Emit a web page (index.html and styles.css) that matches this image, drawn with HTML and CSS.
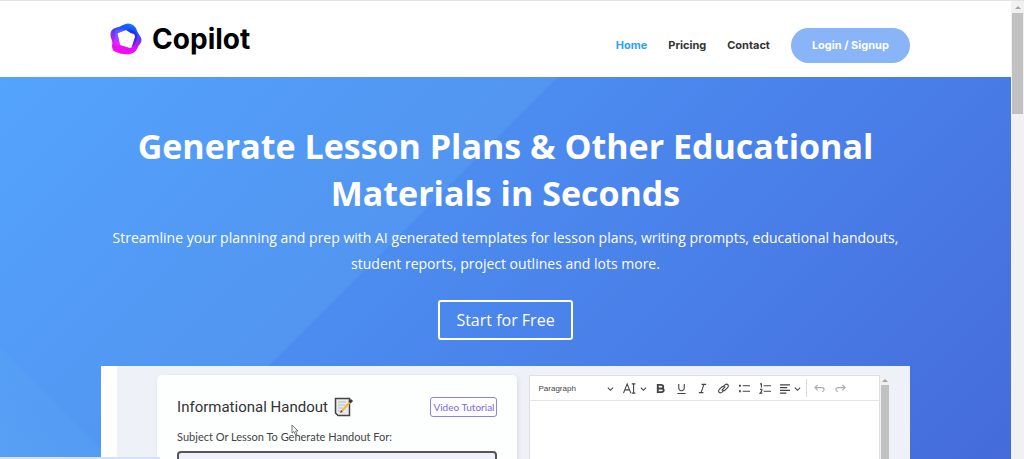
FILE: index.html
```
<!DOCTYPE html>
<html lang="en">
<head>
    <meta charset="UTF-8">
    <meta name="viewport" content="width=device-width, initial-scale=1.0">
    <title>Copilot</title>
    <link rel="stylesheet" href="styles.css">
</head>
<body>
    <div class="page">
        <header class="site-header">
            <div class="container header-inner">
                <a class="logo" href="#">
                    <svg class="logo-mark" viewBox="0 0 32 32" aria-hidden="true">
                        <defs>
                            <linearGradient id="ring" x1="0.3" y1="1" x2="0.6" y2="0">
                                <stop offset="0" stop-color="#ff0af0"/>
                                <stop offset="0.3" stop-color="#e010fa"/>
                                <stop offset="0.6" stop-color="#6a35f5"/>
                                <stop offset="0.85" stop-color="#0b5cff"/>
                                <stop offset="1" stop-color="#1276ff"/>
                            </linearGradient>
                            <linearGradient id="fold" x1="0" y1="0" x2="0.2" y2="1">
                                <stop offset="0" stop-color="#3c7cff"/>
                                <stop offset="1" stop-color="#f02cff"/>
                            </linearGradient>
                        </defs>
                        <path fill="url(#ring)" fill-rule="evenodd" d="M13 2Q18 -1 23 2Q26 4 27 8Q28 10 30 13Q33 17 30 21Q28 23 27 26Q25 30 20 31Q12 32 6 29Q2 28 2 23Q3 19 1 15Q-1 7 5 5Q10 4 13 2ZM16 7L8 10Q7 11 8 13L10 22L20 25Q22 25 22 23L25 14Q25 12 24 11Q20 10 16 7Z"/>
                        <path fill="url(#fold)" opacity="0.7" d="M5 8Q9 5 16 7L8 10Q7 11 8 13L10 22Q4 24 4 18Q5 13 5 8Z"/>
                        <path fill="#2412c8" opacity="0.5" d="M16 7Q24 5 27 12Q27 20 22 24L25 14Q25 12 24 11Q20 10 16 7Z"/>
                    </svg>
                    <span>Copilot</span>
                </a>
                <nav class="main-nav">
                    <a class="active" href="#">Home</a>
                    <a href="#">Pricing</a>
                    <a href="#">Contact</a>
                    <a class="login-btn" href="#">Login / Signup</a>
                </nav>
            </div>
        </header>

        <main class="hero">
            <div class="container">
                <h1>Generate Lesson Plans &amp; Other Educational Materials in Seconds</h1>
                <p>Streamline your planning and prep with AI generated templates for lesson plans, writing prompts, educational handouts, student reports, project outlines and lots more.</p>
                <a class="start-btn" href="#">Start for Free</a>

                <div class="app">
                    <form class="handout">
                        <div class="handout-head">
                            <h2>Informational Handout</h2>
                            <svg class="memo" viewBox="0 0 20 20" aria-hidden="true">
                                <path fill="#e9ebeb" stroke="#444" stroke-width="1.500" d="M1.500 1.500H15.500V18.500H4L1.500 16Z"/>
                                <path stroke="#b7bcbe" d="M4 5H12M4 8H11M4 11H9M4 14H8"/>
                                <path stroke="#f4b63f" stroke-width="2" d="M8 14L16 5"/>
                                <path stroke="#3b3b3b" stroke-width="3" d="M15.500 5.500L18 3"/>
                                <path fill="#555" d="M6 16L7 13L9 15Z"/>
                            </svg>
                            <button type="button" class="video-btn">Video Tutorial</button>
                        </div>
                        <label for="subject">Subject Or Lesson To Generate Handout For:</label>
                        <input type="text" id="subject" value="World War Two">
                        <svg class="cursor" viewBox="0 0 8 12" aria-hidden="true">
                            <path fill="#fff" stroke="#777" d="M1 1V9L3 7.500L4.500 11L6 10.300L4.500 7H7Z"/>
                        </svg>
                    </form>

                    <div class="editor">
                        <div class="editor-main">
                            <div class="toolbar">
                                <button type="button" class="paragraph">Paragraph
                                    <svg class="chevron" viewBox="0 0 8 8"><path d="M1 3L4 6L7 3"/></svg>
                                </button>
                                <button type="button" class="wide" aria-label="Font size">
                                    <svg class="font-icon" viewBox="0 0 14 12"><path d="M1 11L5 1L9 11M2.500 7.500H7.500M10 1H14M12 1V11M10 11H14"/></svg>
                                    <svg class="chevron" viewBox="0 0 8 8"><path d="M1 3L4 6L7 3"/></svg>
                                </button>
                                <button type="button" aria-label="Bold"><svg viewBox="0 0 12 12"><path class="heavy" d="M3 2H6.500Q9 2 9 4T6.500 6H3ZM3 6H7Q9.500 6 9.500 8T7 10H3Z"/></svg></button>
                                <button type="button" aria-label="Underline"><svg viewBox="0 0 12 12"><path d="M3 1V5Q3 8.500 6 8.500T9 5V1M1.500 11.500H10.500"/></svg></button>
                                <button type="button" aria-label="Italic"><svg viewBox="0 0 12 12"><path d="M5 1.500H10M2 10.500H7M7.500 1.500L4.500 10.500"/></svg></button>
                                <button type="button" aria-label="Link"><svg viewBox="0 0 12 12"><path d="M4 8L8 4M5 4.500L7.500 2Q9.500 0.500 11 2Q12 3.500 10.500 5L7.500 8Q6 9 5 8M7 7.500L4.500 10Q2.500 11.500 1 10Q0 8.500 1.500 7L4.500 4Q6 3 7 4"/></svg></button>
                                <button type="button" aria-label="Bulleted list"><svg viewBox="0 0 12 12"><path d="M4 3H12M4 9H12"/><path class="heavy" d="M0 3H2M0 9H2"/></svg></button>
                                <button type="button" aria-label="Numbered list"><svg viewBox="0 0 12 12"><path d="M4 3H12M4 9H12"/><path d="M0 1H1.500V5M0 7H2V8.500L0 11H2.500"/></svg></button>
                                <button type="button" class="wide align" aria-label="Alignment">
                                    <svg viewBox="0 0 12 12"><path d="M1 2H12M1 5H9M1 8H12M1 11H8"/></svg>
                                    <svg class="chevron" viewBox="0 0 8 8"><path d="M1 3L4 6L7 3"/></svg>
                                </button>
                                <span class="divider"></span>
                                <button type="button" class="muted" aria-label="Undo"><svg viewBox="0 0 12 12"><path d="M4 2L1 5L4 8M1 5H8Q11 5 11 7Q11 9 9 9.500"/></svg></button>
                                <button type="button" class="muted" aria-label="Redo"><svg viewBox="0 0 12 12"><path d="M8 2L11 5L8 8M11 5H4Q1 5 1 7Q1 9 3 9.500"/></svg></button>
                            </div>
                        </div>
                        <div class="editor-scroll"><span class="arrow-up"></span><span class="thumb"></span></div>
                    </div>
                </div>
            </div>
        </main>
    </div>
    <div class="page-scroll"><span class="arrow-up"></span><span class="thumb"></span></div>
    <div class="status-bar"></div>
</body>
</html>
```

FILE: styles.css
```
* {
    box-sizing: border-box;
}
body {
    margin: 0;
    height: 100vh;
    display: flex;
    overflow: hidden;
    font-family: "Open Sans", sans-serif;
    border-top: 1px solid #e3e3e3;
}
a {
    text-decoration: none;
}
button {
    font-family: inherit;
    cursor: pointer;
}
.page {
    flex: 1;
    min-width: 0;
    display: flex;
    flex-direction: column;
}
.container {
    width: 80%;
    margin: 0 auto;
}

/* Header */
.site-header {
    background-color: #fff;
}
.header-inner {
    display: flex;
    justify-content: space-between;
    align-items: center;
    height: 76px;
}
.logo {
    display: flex;
    align-items: center;
    gap: 10px;
    padding-left: 9px;
    color: #000;
    font: bold 28px "Inter", sans-serif;
}
.logo-mark {
    width: 32px;
    height: 32px;
}
.main-nav {
    display: flex;
    align-items: center;
    gap: 21px;
    padding-top: 12px;
    font: bold 11px "Inter", sans-serif;
}
.main-nav a {
    color: #333;
}
.main-nav .active {
    color: #2ea3f2;
}
.main-nav .login-btn {
    padding: 10px 21px;
    border-radius: 18px;
    line-height: 15px;
    color: #fff;
    background-color: #89b4f7;
}

/* Hero */
.hero {
    flex: 1;
    min-height: 0;
    padding-top: 46px;
    overflow: hidden;
    text-align: center;
    color: #fff;
    background:
        linear-gradient(45deg, rgba(95,170,245,0.4) 0%, rgba(95,170,245,0.2) 8%, transparent 8%),
        linear-gradient(135deg, rgba(95,170,240,0.1) 0%, rgba(95,170,240,0.3) 40%, transparent 40%),
        linear-gradient(135deg, #52a3ff 0%, #4b88ee 48%, #456bdb 100%);
}
h1 {
    margin: 0;
    font: bold 34px/47px "Open Sans", sans-serif;
}
.hero p {
    margin: 8px 0 23px;
    font-size: 14px;
    line-height: 26px;
}
.start-btn {
    display: inline-block;
    padding: 6px 16px;
    border: 2px solid #fff;
    border-radius: 3px;
    font-size: 16px;
    line-height: 24px;
    color: #fff;
}

/* App preview */
.app {
    display: grid;
    grid-template-columns: 1fr 1fr;
    gap: 12px;
    height: 400px;
    margin-top: 26px;
    padding: 9px 20px 0 40px;
    text-align: left;
    border-left: 16px solid #fff;
    background-color: #eef1f8;
}
.handout {
    position: relative;
    padding: 20px;
    border-radius: 5px 5px 0 0;
    background-color: #fdfefe;
    box-shadow: 1px 2px 4px rgba(0,0,0,0.1);
}
.handout-head {
    display: flex;
    align-items: center;
    gap: 6px;
    height: 24px;
}
h2 {
    margin: 0;
    font: 15px "Roboto", sans-serif;
    color: #333;
}
.memo {
    width: 20px;
    height: 20px;
    fill: none;
}
.video-btn {
    margin-left: auto;
    height: 20px;
    padding: 0 2px;
    font: 10px "Lato", sans-serif;
    color: #7a68e0;
    background-color: #fff;
    border: 1px solid #8f80e8;
    border-radius: 3px;
}
.handout label {
    display: block;
    margin: 11px 0 6px;
    font: 11px/14px "Lato", sans-serif;
    color: #444;
}
.handout input {
    width: 100%;
    height: 26px;
    padding: 0 8px;
    font: 11px "Roboto", sans-serif;
    color: #999;
    background-color: #eef1f8;
    border: 2px solid #555;
    border-radius: 4px;
}
.cursor {
    position: absolute;
    top: 49px;
    left: 134px;
    width: 8px;
    height: 12px;
}

/* Editor */
.editor {
    display: flex;
}
.editor-main {
    flex: 1;
    background-color: #fff;
    border: 1px solid #dcdfe4;
}
.toolbar {
    display: flex;
    align-items: center;
    height: 25px;
    padding-left: 8px;
    border-bottom: 1px solid #e4e4e4;
}
.toolbar button {
    display: flex;
    align-items: center;
    justify-content: center;
    width: 21px;
    padding: 0;
    color: #444;
    background: none;
    border: none;
}
.toolbar .paragraph {
    width: 76px;
    margin-right: 8px;
    justify-content: space-between;
    font: 8px "Liberation Sans", sans-serif;
}
.toolbar .wide {
    width: 28px;
    justify-content: flex-start;
    gap: 4px;
}
.toolbar .align {
    padding-left: 3px;
}
.toolbar svg {
    width: 11px;
    height: 11px;
    overflow: visible;
    fill: none;
    stroke: currentColor;
    stroke-width: 1.200;
}
.toolbar .font-icon {
    width: 14px;
}
.toolbar .chevron {
    width: 7px;
    height: 7px;
}
.toolbar .heavy {
    stroke-width: 2;
}
.toolbar .muted {
    color: #aaa;
}
.divider {
    width: 1px;
    height: 18px;
    margin: 0 2px;
    background-color: #ddd;
}

/* Scrollbars */
.page-scroll, .editor-scroll {
    display: flex;
    flex-direction: column;
    align-items: center;
    background-color: #f1f1f1;
}
.page-scroll {
    width: 13px;
}
.editor-scroll {
    width: 10px;
}
.arrow-up {
    margin: 5px 0 4px;
    border: 3px solid transparent;
    border-top: none;
    border-bottom: 3px solid #a3a3a3;
}
.thumb {
    width: 11px;
    height: 101px;
    background-color: #c1c1c1;
}
.editor-scroll .arrow-up {
    margin: 4px 0 3px;
}
.editor-scroll .thumb {
    width: 8px;
    flex: 1;
}
.status-bar {
    position: fixed;
    left: 0;
    bottom: 0;
    width: 160px;
    height: 2px;
    background-color: #d5e1f8;
}
```
